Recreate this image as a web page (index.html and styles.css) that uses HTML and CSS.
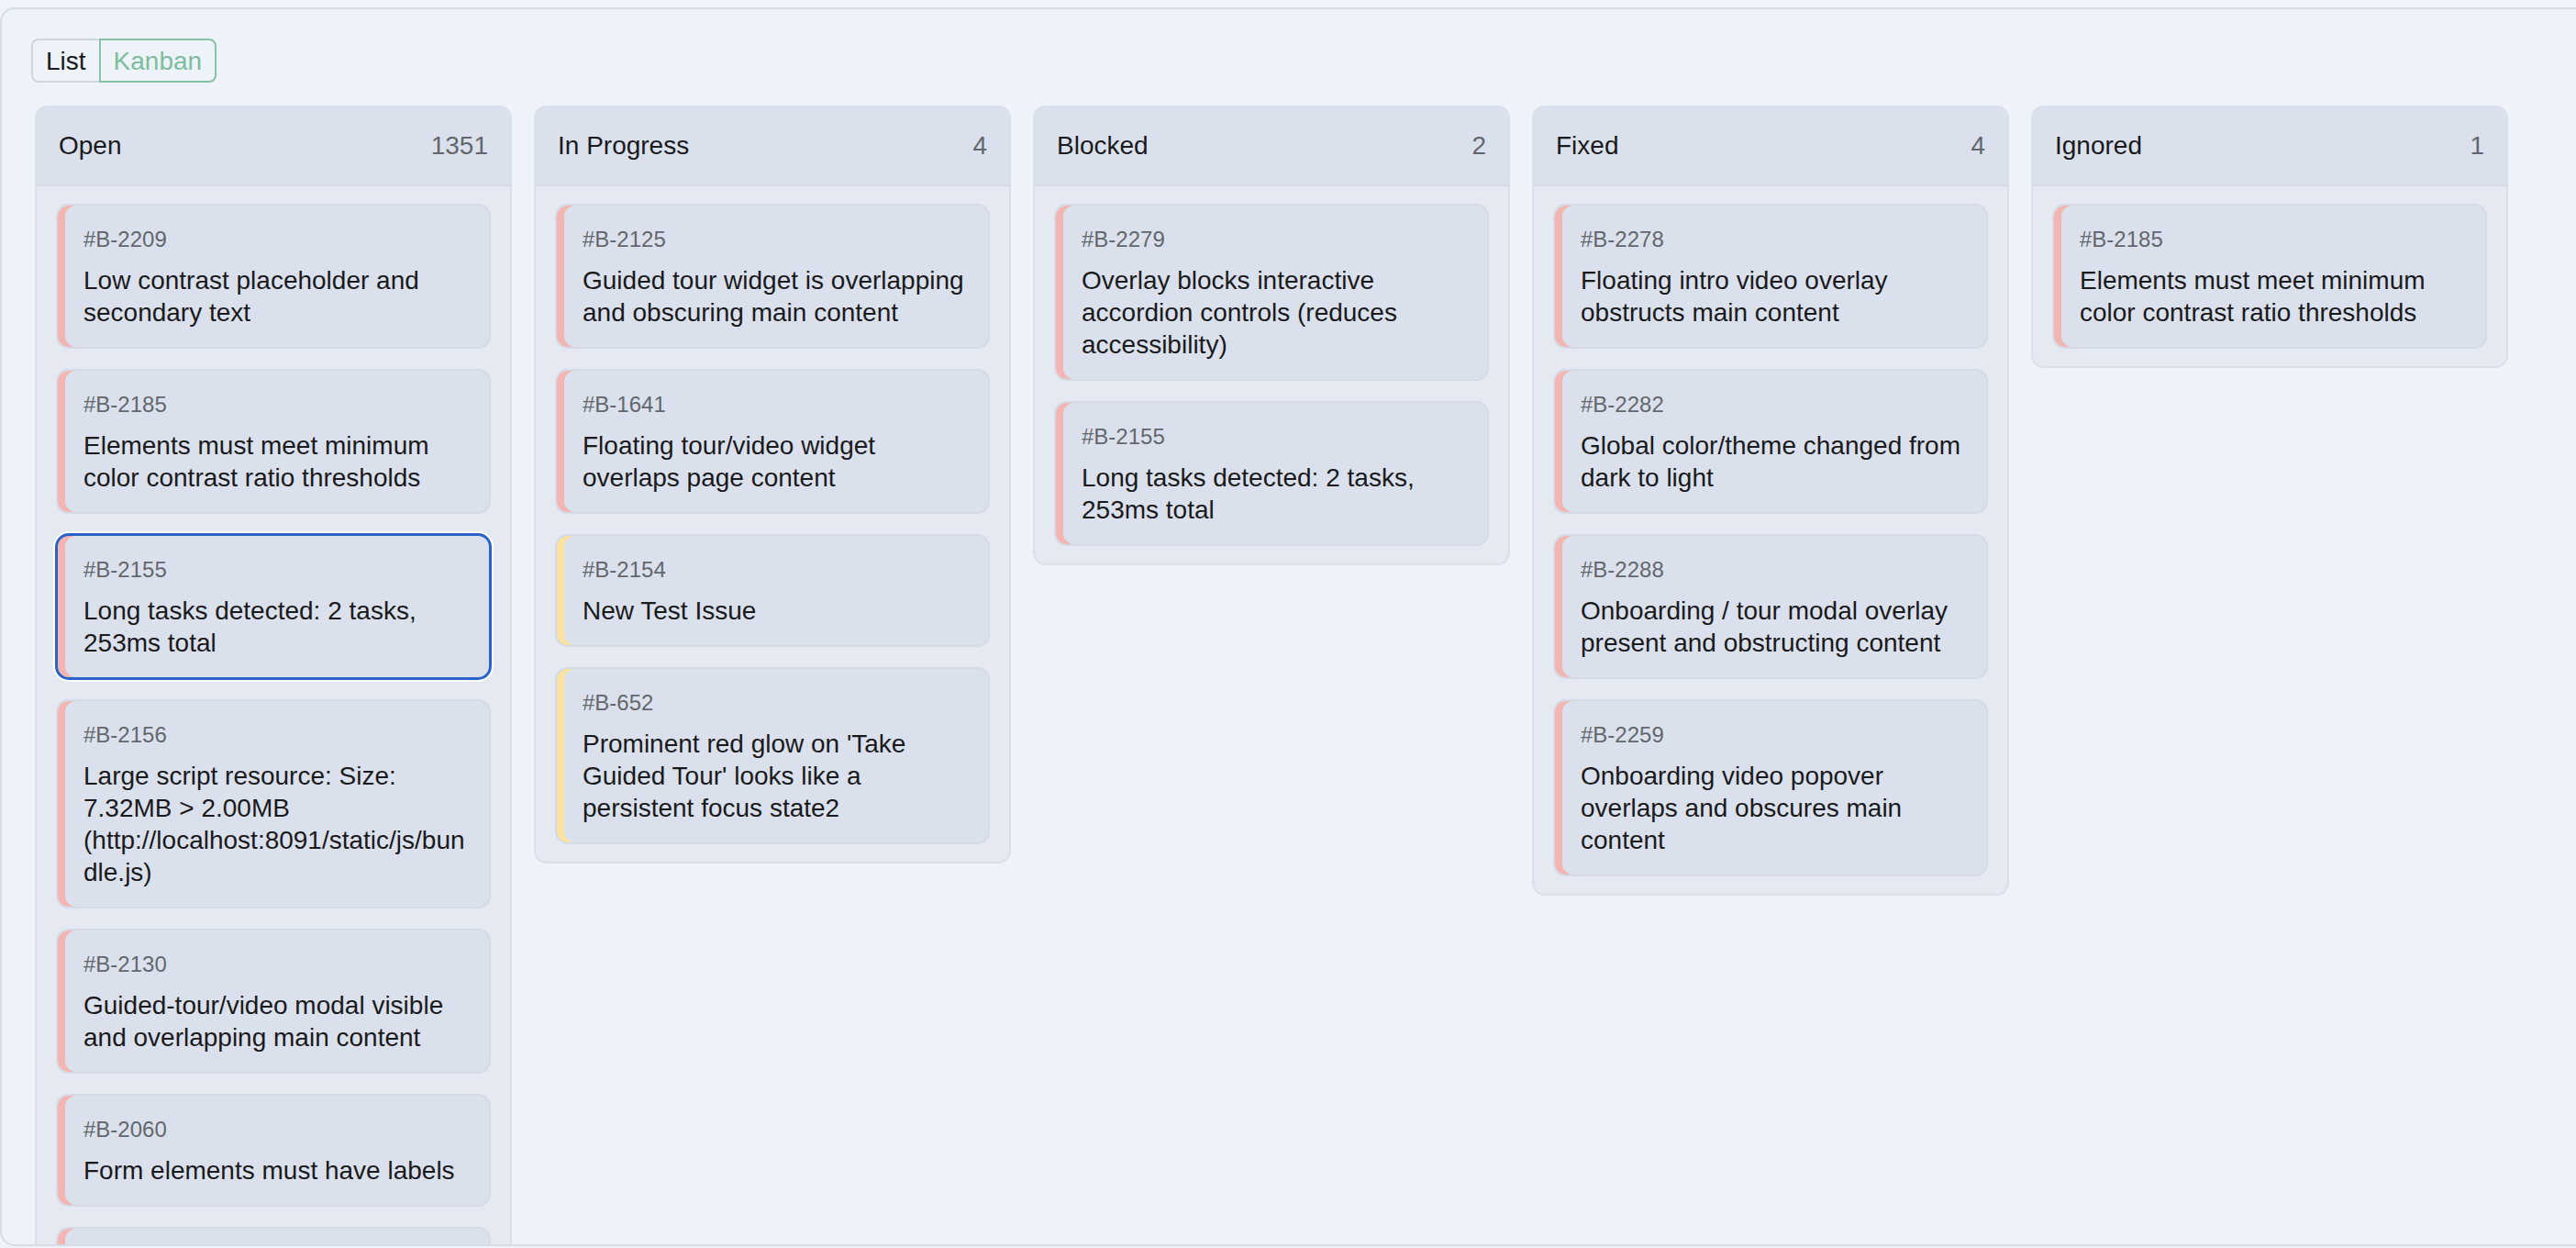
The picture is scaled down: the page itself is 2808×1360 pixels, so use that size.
FILE: index.html
```html
<!DOCTYPE html>
<html lang="en">
<head>
  <meta charset="UTF-8" />
  <meta name="viewport" content="width=device-width, initial-scale=1.0"/>
  <title>Issues - Kanban</title>
  <link rel="stylesheet" href="styles.css">
</head>
<body>

  <div class="issues-panel">
    <div class="view-toggle">
      <button type="button" class="toggle-btn">List</button>
      <button type="button" class="toggle-btn active">Kanban</button>
    </div>

    <div class="board">
      <!-- Open -->
      <section class="board-column">
        <header class="column-header">
          <span class="column-title">Open</span>
          <span class="column-count">1351</span>
        </header>
        <div class="column-body">
          <div class="issue-card sev-high">
            <div class="issue-id">#B-2209</div>
            <div class="issue-title">Low contrast placeholder and secondary text</div>
          </div>
          <div class="issue-card sev-high">
            <div class="issue-id">#B-2185</div>
            <div class="issue-title">Elements must meet minimum color contrast ratio thresholds</div>
          </div>
          <div class="issue-card sev-high selected">
            <div class="issue-id">#B-2155</div>
            <div class="issue-title">Long tasks detected: 2 tasks, 253ms total</div>
          </div>
          <div class="issue-card sev-high">
            <div class="issue-id">#B-2156</div>
            <div class="issue-title">Large script resource: Size: 7.32MB &gt; 2.00MB (http://localhost:8091/static/js/bundle.js)</div>
          </div>
          <div class="issue-card sev-high">
            <div class="issue-id">#B-2130</div>
            <div class="issue-title">Guided-tour/video modal visible and overlapping main content</div>
          </div>
          <div class="issue-card sev-high">
            <div class="issue-id">#B-2060</div>
            <div class="issue-title">Form elements must have labels</div>
          </div>
          <!-- next card only peeks in below the fold -->
          <div class="issue-card sev-high placeholder"></div>
        </div>
      </section>

      <!-- In Progress -->
      <section class="board-column">
        <header class="column-header">
          <span class="column-title">In Progress</span>
          <span class="column-count">4</span>
        </header>
        <div class="column-body">
          <div class="issue-card sev-high">
            <div class="issue-id">#B-2125</div>
            <div class="issue-title">Guided tour widget is overlapping and obscuring main content</div>
          </div>
          <div class="issue-card sev-high">
            <div class="issue-id">#B-1641</div>
            <div class="issue-title">Floating tour/video widget overlaps page content</div>
          </div>
          <div class="issue-card sev-medium">
            <div class="issue-id">#B-2154</div>
            <div class="issue-title">New Test Issue</div>
          </div>
          <div class="issue-card sev-medium">
            <div class="issue-id">#B-652</div>
            <div class="issue-title">Prominent red glow on 'Take Guided Tour' looks like a persistent focus state2</div>
          </div>
        </div>
      </section>

      <!-- Blocked -->
      <section class="board-column">
        <header class="column-header">
          <span class="column-title">Blocked</span>
          <span class="column-count">2</span>
        </header>
        <div class="column-body">
          <div class="issue-card sev-high">
            <div class="issue-id">#B-2279</div>
            <div class="issue-title">Overlay blocks interactive accordion controls (reduces accessibility)</div>
          </div>
          <div class="issue-card sev-high">
            <div class="issue-id">#B-2155</div>
            <div class="issue-title">Long tasks detected: 2 tasks, 253ms total</div>
          </div>
        </div>
      </section>

      <!-- Fixed -->
      <section class="board-column">
        <header class="column-header">
          <span class="column-title">Fixed</span>
          <span class="column-count">4</span>
        </header>
        <div class="column-body">
          <div class="issue-card sev-high">
            <div class="issue-id">#B-2278</div>
            <div class="issue-title">Floating intro video overlay obstructs main content</div>
          </div>
          <div class="issue-card sev-high">
            <div class="issue-id">#B-2282</div>
            <div class="issue-title">Global color/theme changed from dark to light</div>
          </div>
          <div class="issue-card sev-high">
            <div class="issue-id">#B-2288</div>
            <div class="issue-title">Onboarding / tour modal overlay present and obstructing content</div>
          </div>
          <div class="issue-card sev-high">
            <div class="issue-id">#B-2259</div>
            <div class="issue-title">Onboarding video popover overlaps and obscures main content</div>
          </div>
        </div>
      </section>

      <!-- Ignored -->
      <section class="board-column">
        <header class="column-header">
          <span class="column-title">Ignored</span>
          <span class="column-count">1</span>
        </header>
        <div class="column-body">
          <div class="issue-card sev-high">
            <div class="issue-id">#B-2185</div>
            <div class="issue-title">Elements must meet minimum color contrast ratio thresholds</div>
          </div>
        </div>
      </section>
    </div>
  </div>

</body>
</html>
```

FILE: styles.css
```css
* {
  box-sizing: border-box;
  margin: 0;
  padding: 0;
}

html,
body {
  overflow: hidden;
}

body {
  font-family: 'Liberation Sans', Arial, Helvetica, sans-serif;
  background-color: #f0f3f9;
  color: #1a1a1c;
  padding-top: 8px;
  height: 100vh;
}

.issues-panel {
  width: calc(100% + 40px);
  height: 1350px;
  background-color: #eef2f9;
  border: 2px solid #d7dde7;
  border-radius: 16px;
  padding: 32px;
  overflow: hidden;
}

/* view switcher */
.view-toggle {
  display: inline-flex;
}

.toggle-btn {
  font-family: inherit;
  font-size: 28px;
  line-height: 31px;
  padding: 7px 14px 6px;
  background: transparent;
  color: #1a1a1c;
  border: 2px solid #cfd6e0;
  cursor: pointer;
}

.toggle-btn:first-child {
  border-radius: 8px 0 0 8px;
  border-right: none;
}

.toggle-btn:last-child {
  border-radius: 0 8px 8px 0;
}

.toggle-btn.active {
  color: #7dbd9c;
  border-color: #86c2a4;
}

/* board */
.board {
  display: flex;
  align-items: flex-start;
  gap: 24px;
  padding: 4px;
  margin-top: 21px;
}

.board-column {
  flex: 0 0 520px;
  background-color: #e4e9f2;
  border: 2px solid #dae0ea;
  border-radius: 14px;
  overflow: hidden;
}

.column-header {
  display: flex;
  justify-content: space-between;
  align-items: center;
  height: 86px;
  padding: 0 24px;
  background-color: #dbe1ec;
  border-bottom: 2px solid #d5dce7;
  font-size: 28px;
}

.column-count {
  color: #63676d;
}

.column-body {
  display: flex;
  flex-direction: column;
  gap: 22px;
  padding: 19px 21px 19px;
}

/* cards */
.issue-card {
  background-color: #dbe1ec;
  border: 2px solid #d4dbe6;
  border-radius: 14px;
  padding: 20px 20px 20px 28px;
  cursor: pointer;
}

.issue-card.placeholder {
  height: 158px;
}

.issue-card.sev-high {
  box-shadow: inset 8px 0 0 #f4b4b1;
}

.issue-card.sev-medium {
  box-shadow: inset 8px 0 0 #fbe29f;
}

.issue-card.selected {
  border-color: #2a63c8;
  box-shadow: inset 8px 0 0 #f4b4b1, 0 0 0 1px #2a63c8, 0 0 0 3px #ffffff;
}

.issue-id {
  font-size: 24px;
  line-height: 34px;
  color: #63676d;
  margin-bottom: 10px;
}

.issue-title {
  font-size: 28px;
  line-height: 35px;
  color: #1a1a1c;
  overflow-wrap: anywhere;
}
```
